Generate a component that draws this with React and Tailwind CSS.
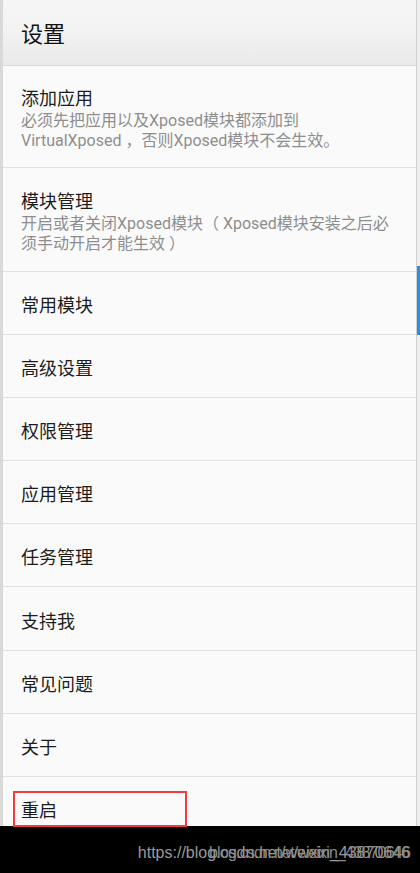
const items = [
  {
    title: "添加应用",
    desc: "必须先把应用以及Xposed模块都添加到VirtualXposed ，否则Xposed模块不会生效。",
    h: "h-[102px]",
  },
  {
    title: "模块管理",
    desc: "开启或者关闭Xposed模块（ Xposed模块安装之后必须手动开启才能生效 ）",
    h: "h-[104px]",
  },
  { title: "常用模块", h: "h-[63px]" },
  { title: "高级设置", h: "h-[63px]" },
  { title: "权限管理", h: "h-[63px]" },
  { title: "应用管理", h: "h-[63px]" },
  { title: "任务管理", h: "h-[63px]" },
  { title: "支持我", h: "h-[64px]" },
  { title: "常见问题", h: "h-[63px]" },
  { title: "关于", h: "h-[63px]" },
  { title: "重启", h: "h-[63px]" },
];

const font = { fontFamily: 'Roboto, "Noto Sans CJK SC", sans-serif' };

const Row = ({ title, desc, h }) => (
  <div className={`${h} shrink-0 flex flex-col justify-center px-[18px] pt-[5px] border-b border-[#e1e1e1] bg-[#fafafa]`}>
    <div className="text-[18px] leading-[23px] text-[#1c1c1c]">{title}</div>
    {desc && (
      <div className="text-[16px] leading-[20px] text-[#8e8e8e] mt-[1px]">{desc}</div>
    )}
  </div>
);

export default function App() {
  return (
    <div className="relative w-[420px] h-[873px] overflow-hidden bg-[#e9e9e9] flex flex-col" style={font}>
      <div className="h-[826px] flex shrink-0">
        {/* левый край фона */}
        <div className="w-[3px] bg-[#d9d9d9]" />

        {/* диалог */}
        <div className="flex-1 flex flex-col overflow-hidden bg-[#fafafa] border-r border-[#cfcfcf]">
          <div className="h-[66px] shrink-0 flex items-center px-[18px] pt-[4px] bg-gradient-to-b from-[#f6f6f6] via-[#f2f2f2] to-[#e9e9e9] border-b border-[#dadada]">
            <span className="text-[22px] text-[#111] leading-none">设置</span>
          </div>
          {items.map((it) => (
            <Row key={it.title} {...it} />
          ))}
        </div>

        {/* правый край фона */}
        <div className="w-[3px] flex flex-col bg-[#efefef]">
          <div className="h-[266px]" />
          <div className="h-[69px] bg-[#2f8ce0]" />
        </div>
      </div>

      {/* нижняя панель */}
      <div className="flex-1 bg-black" />

      {/* красная рамка */}
      <div className="absolute left-[13px] top-[791px] w-[174px] h-[36px] border-2 border-[#f23b3b]" />

      {/* водяной знак */}
      <div
        className="absolute right-[10px] top-[843px] text-[16px] leading-[20px] text-[#9a9a9a]"
        style={{ fontFamily: '"Liberation Sans", sans-serif' }}
      >
        https://blog.csdn.net/weixin_43870646
      </div>
      <div
        className="absolute right-[10px] top-[843px] text-[16px] leading-[20px] text-[#8a8a8a] tracking-[-0.8px]"
        style={{ fontFamily: '"Liberation Sans", sans-serif' }}
      >
        blog.csdn.net/weixin_43870646
      </div>
    </div>
  );
}
